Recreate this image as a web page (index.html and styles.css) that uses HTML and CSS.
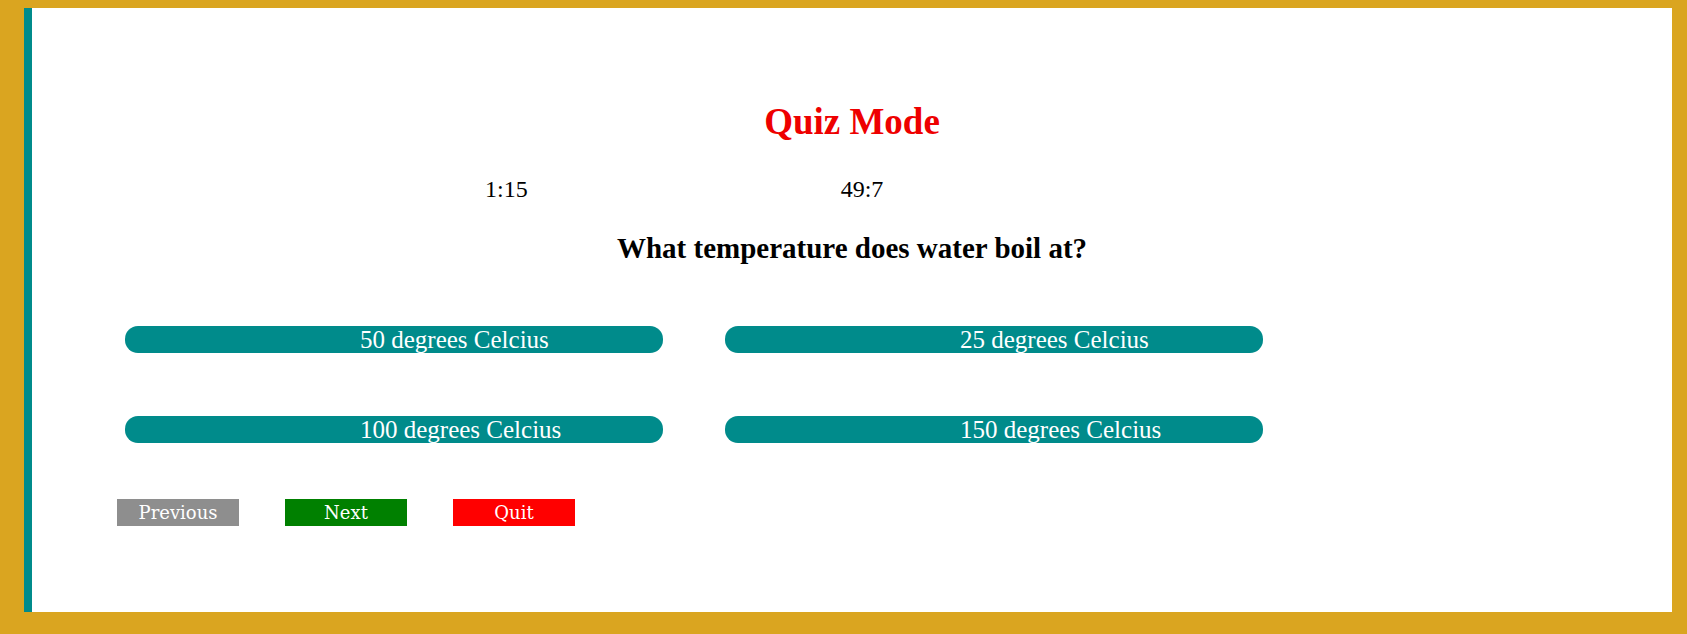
FILE: index.html
```html
<!DOCTYPE html>
<html lang="en">
<head>
<meta charset="utf-8">
<title>Quiz Mode</title>
<link rel="stylesheet" href="styles.css">
</head>
<body>
<main class="card">
  <h1 class="title">Quiz Mode</h1>
  <div class="timers">
    <span class="timer">1:15</span>
    <span class="timer">49:7</span>
  </div>
  <h2 class="question">What temperature does water boil at?</h2>
  <div class="answers">
    <button class="answer">50 degrees Celcius</button>
    <button class="answer">25 degrees Celcius</button>
    <button class="answer">100 degrees Celcius</button>
    <button class="answer">150 degrees Celcius</button>
  </div>
  <div class="controls">
    <button class="ctrl ctrl-prev">Previous</button>
    <button class="ctrl ctrl-next">Next</button>
    <button class="ctrl ctrl-quit">Quit</button>
  </div>
</main>
</body>
</html>
```
FILE: styles.css
```css
html, body {
  margin: 0;
  padding: 0;
}

body {
  background: #daa520;
  padding: 8px 15px 22px 24px;
  font-family: "Liberation Serif", "Times New Roman", serif;
  color: #000;
}

.card {
  box-sizing: border-box;
  height: 604px;
  background: #fff;
  border-left: 8px solid #008b8b;
  padding-top: 93px;
  display: flex;
  flex-direction: column;
}

.title {
  margin: 0;
  font-size: 37px;
  line-height: 42px;
  font-weight: bold;
  color: #ee0000;
  text-align: center;
}

.timers {
  margin-top: 32px;
  display: flex;
  gap: 313px;
  padding-left: 453px;
  font-size: 24px;
  line-height: 28px;
}

.question {
  margin: 28px 0 0;
  font-size: 29px;
  line-height: 34px;
  font-weight: bold;
  text-align: center;
}

.answers {
  margin-top: 61px;
  padding-left: 93px;
  display: grid;
  grid-template-columns: 538px 538px;
  column-gap: 62px;
  row-gap: 63px;
}

.answer {
  box-sizing: border-box;
  height: 27px;
  margin: 0;
  padding: 0 0 0 235px;
  border: none;
  border-radius: 13px;
  background: #008b8b;
  color: #fff;
  font-family: "Liberation Serif", "Times New Roman", serif;
  font-size: 25px;
  line-height: 27px;
  text-align: left;
  white-space: nowrap;
  overflow: visible;
}

.controls {
  margin-top: 56px;
  padding-left: 85px;
  display: flex;
  gap: 46px;
}

.ctrl {
  box-sizing: border-box;
  width: 122px;
  height: 27px;
  margin: 0;
  padding: 0;
  border: none;
  border-radius: 0;
  color: #fff;
  font-family: "DejaVu Serif", Georgia, serif;
  font-size: 18px;
  line-height: 27px;
  text-align: center;
}

.ctrl-prev { background: #8e8e8e; }
.ctrl-next { background: #008000; }
.ctrl-quit { background: #ff0000; }
```
